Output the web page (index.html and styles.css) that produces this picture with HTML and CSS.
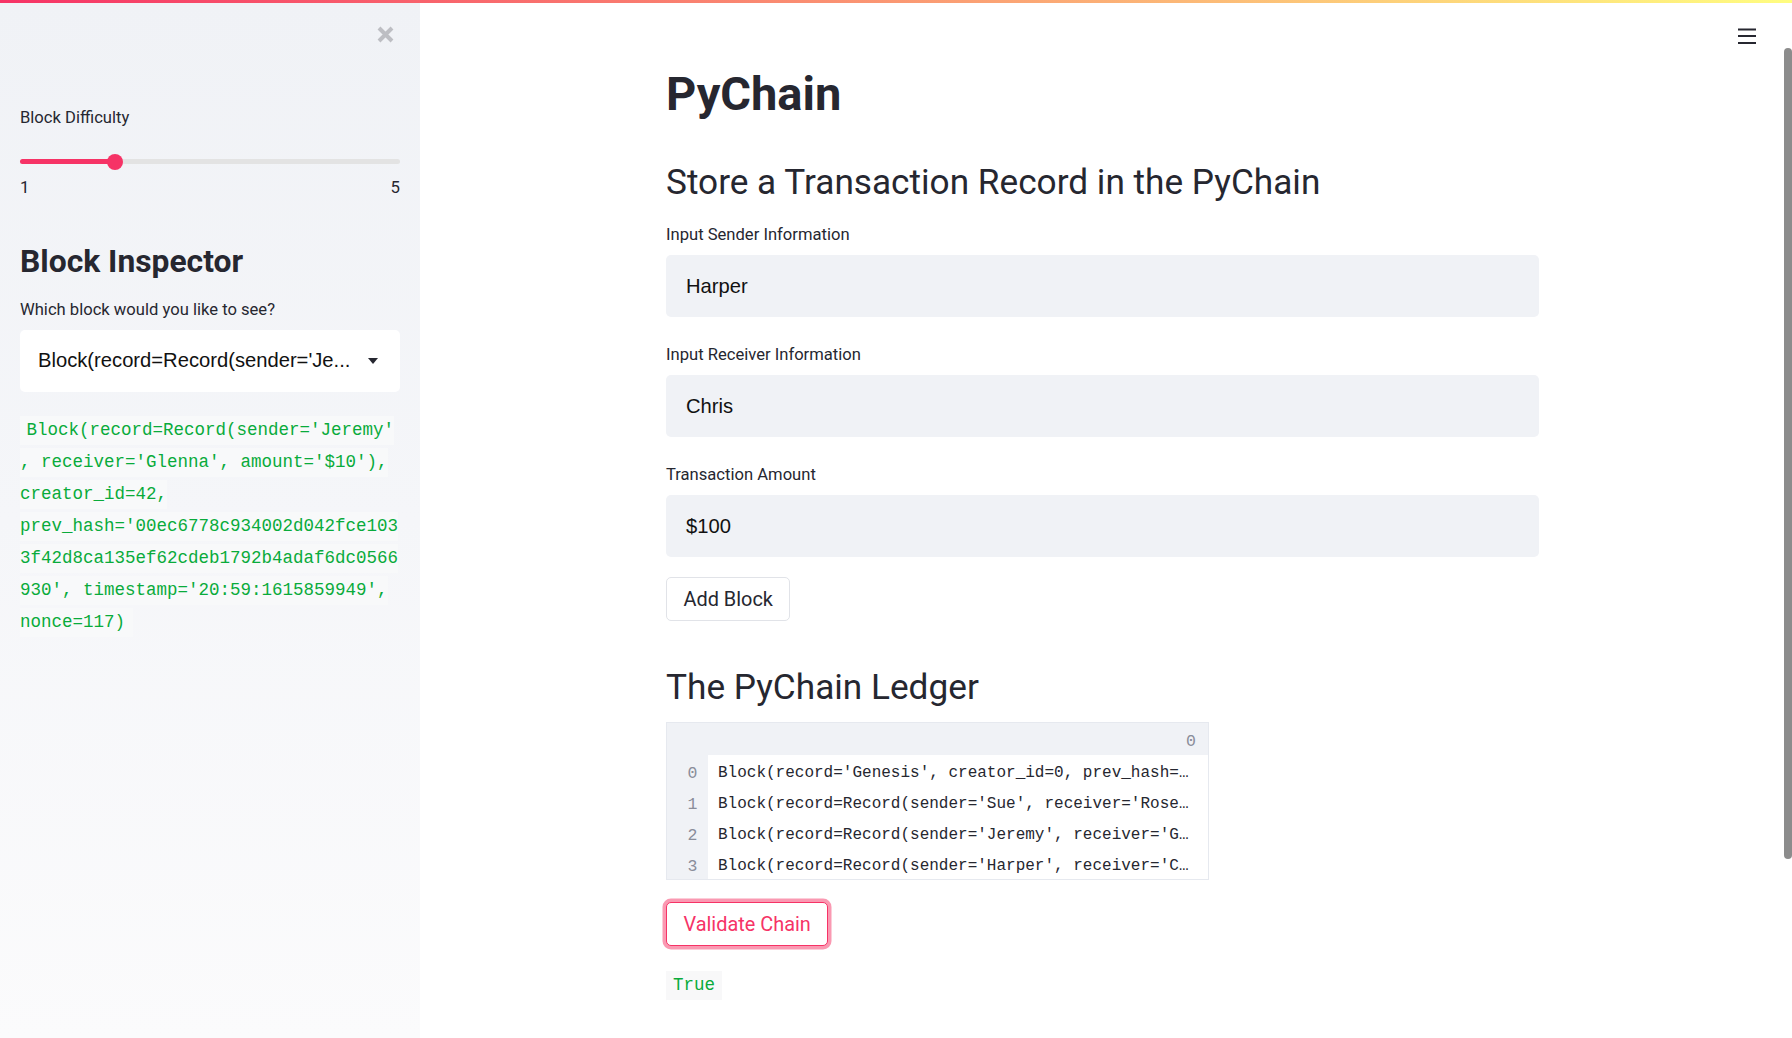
FILE: index.html
```html
<!DOCTYPE html>
<html lang="en">
<head>
<meta charset="utf-8">
<title>PyChain</title>
<link rel="stylesheet" href="styles.css">
</head>
<body>
<div class="decoration"></div>
<div class="app">
  <aside class="sidebar">
    <div class="sb-top">
      <svg class="close" width="17" height="17" viewBox="0 0 17 17"><path d="M2 2 L15 15 M15 2 L2 15" stroke="#bdbec3" stroke-width="4" stroke-linecap="butt"/></svg>
    </div>
    <div class="label difficulty-label">Block Difficulty</div>
    <div class="slider">
      <div class="track"><div class="fill" style="width:25%"></div></div>
      <div class="thumb" style="left:25%"></div>
    </div>
    <div class="ticks"><span>1</span><span>5</span></div>
    <h2 class="sb-heading">Block Inspector</h2>
    <div class="label which-label">Which block would you like to see?</div>
    <div class="select">
      <span class="select-value">Block(record=Record(sender='Je...</span>
      <svg class="caret" width="10" height="6" viewBox="0 0 10 6"><path d="M0 0 H10 L5 6 Z" fill="#262730"/></svg>
    </div>
    <div class="block-code">
      <code class="cl first">Block(record=Record(sender='Jeremy'</code>
      <code class="cl">, receiver='Glenna', amount='$10'),</code>
      <code class="cl">creator_id=42,</code>
      <code class="cl">prev_hash='00ec6778c934002d042fce103</code>
      <code class="cl">3f42d8ca135ef62cdeb1792b4adaf6dc0566</code>
      <code class="cl">930', timestamp='20:59:1615859949',</code>
      <code class="cl last">nonce=117)</code>
    </div>
  </aside>
  <main class="main">
    <div class="content">
      <h1 class="title">PyChain</h1>
      <h2 class="section store">Store a Transaction Record in the PyChain</h2>
      <div class="field">
        <div class="label">Input Sender Information</div>
        <div class="input">Harper</div>
      </div>
      <div class="field">
        <div class="label">Input Receiver Information</div>
        <div class="input">Chris</div>
      </div>
      <div class="field">
        <div class="label">Transaction Amount</div>
        <div class="input">$100</div>
      </div>
      <button class="btn add">Add Block</button>
      <h2 class="section ledger-title">The PyChain Ledger</h2>
      <div class="ledger">
        <div class="lg-head"><div class="lg-corner"></div><div class="lg-colhead">0</div></div>
        <div class="lg-row"><div class="lg-idx">0</div><div class="lg-cell">Block(record='Genesis', creator_id=0, prev_hash='0', timestamp='20:57:1615859847', nonce=0)</div></div>
        <div class="lg-row"><div class="lg-idx">1</div><div class="lg-cell">Block(record=Record(sender='Sue', receiver='Rosemary', amount='$50'), creator_id=42, nonce=31)</div></div>
        <div class="lg-row"><div class="lg-idx">2</div><div class="lg-cell">Block(record=Record(sender='Jeremy', receiver='Glenna', amount='$10'), creator_id=42, nonce=117)</div></div>
        <div class="lg-row"><div class="lg-idx">3</div><div class="lg-cell">Block(record=Record(sender='Harper', receiver='Chris', amount='$100'), creator_id=42, nonce=12)</div></div>
      </div>
      <button class="btn validate">Validate Chain</button>
      <div class="result"><code class="true">True</code></div>
    </div>
    <svg class="hamburger" width="18" height="16" viewBox="0 0 18 16"><rect x="0" y="0.5" width="18" height="2" fill="#262730"/><rect x="0" y="7" width="18" height="2" fill="#262730"/><rect x="0" y="14" width="18" height="2" fill="#262730"/></svg>
    <div class="scrollbar"></div>
  </main>
</div>
</body>
</html>
```
FILE: styles.css
```css
* { box-sizing: border-box; }
html, body { margin: 0; padding: 0; }
body {
  width: 1792px;
  height: 1038px;
  overflow: hidden;
  position: relative;
  font-family: Roboto, "Liberation Sans", sans-serif;
  color: #262730;
  background: #ffffff;
}
.decoration {
  position: absolute;
  top: 0; left: 0; right: 0;
  height: 3px;
  background: linear-gradient(90deg, #f63366, #fffd80);
  z-index: 5;
}
.app { display: flex; height: 1038px; }

/* Sidebar */
.sidebar {
  width: 420px;
  flex: none;
  padding: 0 20px;
  background: linear-gradient(180deg, #f0f2f6 0%, #f5f6f9 50%, #fbfbfc 100%);
  display: flex;
  flex-direction: column;
}
.sb-top { display: flex; justify-content: flex-end; padding-top: 26px; padding-right: 6px; }
.close { display: block; }
.label {
  font-size: 16.6px;
  line-height: 25px;
  color: #262730;
}
.difficulty-label { margin-top: 61.5px; }
.slider {
  position: relative;
  height: 32px;
  margin-top: 16px;
  display: flex;
  align-items: center;
}
.track {
  width: 100%;
  height: 5px;
  border-radius: 3px;
  background: #e3e3e3;
}
.fill { height: 100%; border-radius: 3px; background: #f63366; }
.thumb {
  position: absolute;
  top: 8px;
  width: 16px;
  height: 16px;
  margin-left: -8px;
  border-radius: 50%;
  background: #f63366;
}
.ticks {
  display: flex;
  justify-content: space-between;
  margin-top: -1.5px;
  font-size: 16.8px;
  line-height: 22px;
}
.sb-heading {
  margin: 42.9px 0 0;
  font-size: 31.8px;
  line-height: 40px;
  font-weight: 700;
}
.which-label { margin-top: 16.6px; }
.select {
  margin-top: 7.5px;
  height: 62px;
  background: #ffffff;
  border-radius: 5px;
  display: flex;
  align-items: center;
  justify-content: space-between;
  padding: 0 22px 0 18px;
}
.select-value {
  font-family: "Liberation Sans", Arial, sans-serif;
  font-size: 20.2px;
  color: #111111;
}
.caret { display: block; }
.block-code {
  margin-top: 24.5px;
  display: flex;
  flex-direction: column;
  gap: 3px;
}
.cl {
  display: block;
  width: fit-content;
  height: 29px;
  line-height: 29px;
  font-family: "Liberation Mono", "DejaVu Sans Mono", monospace;
  font-size: 17.5px;
  color: #09ab3b;
  background: #f8f9fa;
  white-space: pre;
}
.cl.first { padding-left: 6.5px; }
.cl.last { padding-right: 7.5px; }

/* Main */
.main { flex: 1; position: relative; }
.content { width: 873px; margin-left: 246px; padding-top: 64px; }
.title {
  margin: 0;
  font-size: 47px;
  line-height: 60px;
  font-weight: 700;
}
.section {
  margin: 0;
  font-size: 35.2px;
  line-height: 48px;
  font-weight: 400;
}
.store { margin-top: 33.7px; }
.field { margin-top: 16.3px; }
.field + .field { margin-top: 25px; }
.field .input { margin-top: 8px; }
.input {
  height: 62px;
  border-radius: 5px;
  background: #f0f2f6;
  padding: 1px 0 0 20px;
  display: flex;
  align-items: center;
  font-family: "Liberation Sans", Arial, sans-serif;
  font-size: 20.2px;
  color: #111111;
}
.btn {
  display: flex;
  align-items: center;
  height: 44px;
  padding: 0 16.5px;
  margin: 0;
  border: 1px solid #e1e3e8;
  border-radius: 5px;
  background: #ffffff;
  font-family: Roboto, "Liberation Sans", sans-serif;
  font-size: 19.9px;
  color: #262730;
}
.add { margin-top: 20.5px; }
.ledger-title { margin-top: 41.2px; }
.ledger {
  margin-top: 11px;
  width: 543px;
  border: 1px solid #e6e9ef;
  font-family: "Liberation Mono", "DejaVu Sans Mono", monospace;
  font-size: 16px;
}
.lg-head { display: flex; height: 32px; background: #f0f2f6; }
.lg-corner { width: 41px; flex: none; }
.lg-colhead {
  flex: 1;
  text-align: right;
  padding: 3px 12px 0 0;
  line-height: 32px;
  color: #8a8d9a;
  font-size: 16.5px;
}
.lg-row { display: flex; height: 31px; }
.lg-idx {
  width: 41px;
  flex: none;
  background: #f0f2f6;
  text-align: right;
  padding: 3px 10.5px 0 0;
  line-height: 31px;
  color: #8a8d9a;
  font-size: 16.5px;
}
.lg-cell {
  flex: 1;
  min-width: 0;
  padding: 3px 18px 0 10px;
  line-height: 31px;
  white-space: nowrap;
  overflow: hidden;
  text-overflow: ellipsis;
  color: #262730;
}
.validate {
  margin-top: 22.5px;
  border-color: #f63366;
  color: #f63366;
  box-shadow: 0 0 0 3.5px rgba(246, 51, 102, 0.5);
}
.result { margin-top: 24.5px; }
.true {
  display: inline-block;
  height: 29px;
  line-height: 29px;
  padding: 0 7px;
  font-family: "Liberation Mono", "DejaVu Sans Mono", monospace;
  font-size: 17.5px;
  color: #09ab3b;
  background: #f8f8f9;
}
.hamburger { position: absolute; top: 28px; right: 36px; }
.scrollbar {
  position: absolute;
  top: 48px;
  right: 0;
  width: 8px;
  height: 811px;
  border-radius: 4px;
  background: #8c8c8c;
}
```
